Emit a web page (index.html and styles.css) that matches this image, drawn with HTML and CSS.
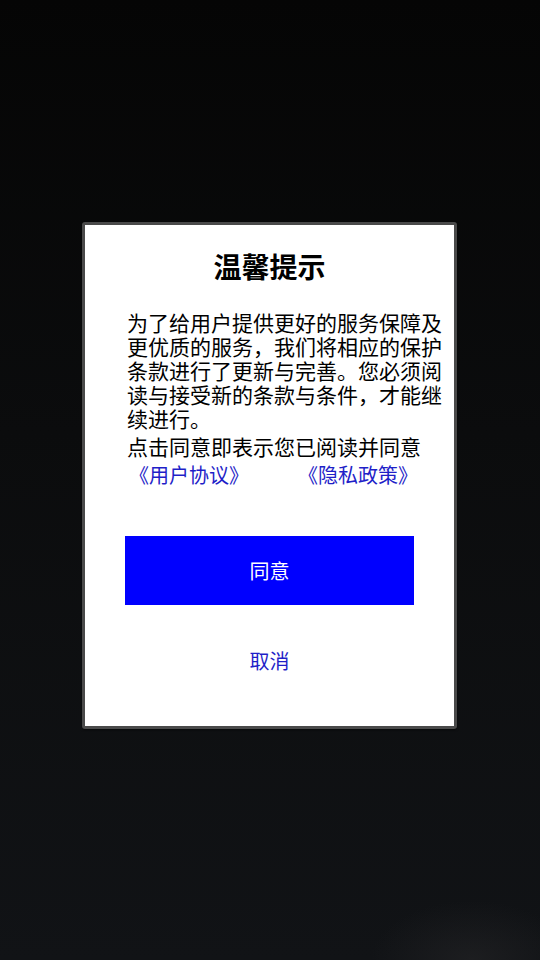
FILE: index.html
```html
<!DOCTYPE html>
<html lang="zh-CN">
<head>
<meta charset="utf-8">
<title>温馨提示</title>
<link rel="stylesheet" href="styles.css">
</head>
<body>
<div class="screen">
  <div class="dialog">
    <h1 class="title">温馨提示</h1>
    <p class="msg">为了给用户提供更好的服务保障及更优质的服务，我们将相应的保护条款进行了更新与完善。您必须阅读与接受新的条款与条件，才能继续进行。</p>
    <p class="msg note">点击同意即表示您已阅读并同意</p>
    <div class="links">
      <a class="link">《用户协议》</a>
      <a class="link">《隐私政策》</a>
    </div>
    <button class="agree">同意</button>
    <div class="cancel">取消</div>
  </div>
</div>
</body>
</html>
```

FILE: styles.css
```css
html, body {
  margin: 0;
  padding: 0;
}
body {
  width: 540px;
  height: 960px;
  overflow: hidden;
  background: linear-gradient(180deg, #050505 0%, #0b0c0d 45%, #111316 100%);
  font-family: "Noto Sans CJK SC", "Noto Sans", sans-serif;
}
.screen {
  position: relative;
  height: 960px;
  padding-top: 222px;
  box-sizing: border-box;
}
.screen::after {
  content: "";
  position: absolute;
  right: 0;
  bottom: 0;
  width: 170px;
  height: 60px;
  background: radial-gradient(ellipse at 60% 100%, rgba(40,40,42,0.5), rgba(20,20,22,0) 70%);
}
.dialog {
  width: 375px;
  margin: 0 0 0 82px;
  box-sizing: border-box;
  background: #fff;
  border: 3px solid #4a4a4a;
  border-radius: 3px;
  box-shadow: 0 1px 2px rgba(0,0,0,0.6);
  padding: 23px 0 53px;
}
.title {
  margin: 0;
  font-size: 28px;
  line-height: 36px;
  font-weight: bold;
  text-align: center;
  color: #000;
}
.msg {
  margin: 26px 10px 0 42px;
  font-size: 21px;
  line-height: 24px;
  color: #000;
}
.note {
  margin-top: 4px;
}
.links {
  display: flex;
  gap: 49px;
  margin: 5px 0 0 44px;
}
.link {
  font-size: 20px;
  line-height: 24px;
  color: #1f1fc8;
}
.agree {
  display: block;
  margin: 49px 0 0 40px;
  width: 289px;
  height: 69px;
  border: none;
  border-radius: 0;
  background: #0000ff;
  color: #fff;
  font-family: inherit;
  font-size: 20px;
  padding: 0;
}
.cancel {
  margin-top: 44px;
  text-align: center;
  font-size: 20px;
  line-height: 24px;
  color: #1f1fc8;
}
```
